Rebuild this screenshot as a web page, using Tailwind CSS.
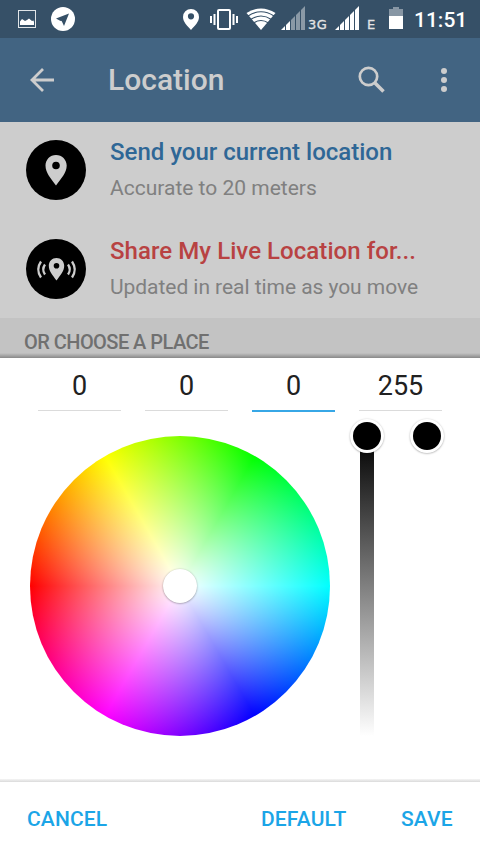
<!DOCTYPE html>
<html lang="en">
<head>
<meta charset="utf-8">
<title>Location</title>
<script src="https://cdn.jsdelivr.net/npm/@tailwindcss/browser@4"></script>
</head>
<body class="w-[480px] h-[854px] overflow-hidden bg-white font-['Roboto',sans-serif]">
<div class="flex h-[358px] flex-col overflow-hidden bg-[#cdcdcd]">
  <!-- status bar -->
  <div class="flex h-[38px] shrink-0 items-start bg-[#365067] text-white">
    <svg class="ml-[18px] mt-[10px] h-[18px] w-[18px] shrink-0" viewBox="0 0 18 18"><rect x=".5" y=".5" width="17" height="17" fill="none" stroke="#fff" stroke-opacity=".85"/><path d="M2 15v-3.500l2-2.500 3 2 2-1 2-1.500 3 2.500 1.500-.5.5 1.500v3z" fill="#fff"/></svg>
    <svg class="ml-[15px] mt-[7px] h-6 w-6 shrink-0" viewBox="0 0 24 24"><circle cx="12" cy="12" r="12" fill="#fff"/><path d="M18 6.500 5 11.500l4.500 2.500.5-.3.8.6 2.200 4.700z" fill="#365067"/></svg>
    <svg class="ml-[108px] mt-[9px] h-[21px] w-4 shrink-0" viewBox="0 0 16 21"><path fill="#fff" fill-rule="evenodd" d="M8 0a8 8 0 0 0-8 8c0 5 4 8.500 8 13 4-4.500 8-8 8-13a8 8 0 0 0-8-8zm0 4.200a3.100 3.100 0 1 1 0 6.200 3.100 3.100 0 0 1 0-6.200z"/></svg>
    <svg class="ml-[11px] mt-[9px] h-[21px] w-7 shrink-0" viewBox="0 0 28 21" fill="none" stroke="#fff"><rect x="8" y="1" width="12" height="19" rx="1" stroke-width="2"/><path d="M1 7v7M27 7v7" stroke-width="2"/><path d="M4.500 5v11M23.500 5v11" stroke-width="2"/></svg>
    <svg class="ml-[8px] mt-[8px] h-[22px] w-[30px] shrink-0" viewBox="0 0 30 22"><path d="M.5 5Q15-4 29.500 5L15 22z" fill="#fff"/><g fill="none" stroke="#365067" stroke-width="1.200"><path d="M2 8Q15-.5 28 8"/><path d="M4.500 11.500Q15 4.500 25.500 11.500"/><path d="M7.500 15Q15 10 22.500 15"/></g></svg>
    <svg class="ml-[5px] mt-[6px] h-6 w-6 shrink-0" viewBox="0 0 24 24"><path d="M0 24 4 20v4zM5 24v-5l4-4v9z" fill="#fff"/><path d="M10 24V14l4-4v14zM15 24V9l4-4v19zM20 24V4l4-4v24z" fill="#fff" fill-opacity=".42"/></svg>
    <span class="ml-[3px] mt-[17px] w-[19px] font-['DejaVu_Sans'] text-[13px] leading-4 tracking-[.4px] text-[#e4e4e4] [-webkit-text-stroke:.3px_#e4e4e4]">3G</span>
    <svg class="ml-[8px] mt-[6px] h-6 w-6 shrink-0" viewBox="0 0 24 24"><path d="M0 24 4 20v4zM5 24v-5l4-4v9zM10 24V14l4-4v14zM15 24V9l4-4v19zM20 24V4l4-4v24z" fill="#fff"/></svg>
    <span class="ml-[8px] mt-[17px] w-[10px] font-['DejaVu_Sans'] text-[13px] leading-4 text-[#e4e4e4] [-webkit-text-stroke:.3px_#e4e4e4]">E</span>
    <svg class="ml-[12px] mt-[7px] h-[22px] w-[14px] shrink-0" viewBox="0 0 14 22"><path d="M4 0h6v2h4v7H0V2h4z" fill="#8796a4"/><path d="M0 9h14v13H0z" fill="#fff"/></svg>
    <span class="ml-[11px] mt-[8px] text-[21px] font-medium leading-6">11:51</span>
  </div>
  <!-- toolbar -->
  <div class="flex h-[84px] shrink-0 items-center bg-[#426482] text-[#cdcdcd]">
    <svg class="ml-[30px] h-6 w-6" viewBox="0 0 24 24" fill="none" stroke="currentColor" stroke-width="2.800"><path d="M13 1 2 12l11 11M2 12h22"/></svg>
    <h1 class="ml-[54px] mb-[2px] w-[250px] text-[30px] font-medium">Location</h1>
    <svg class="h-7 w-7" viewBox="0 0 28 28" fill="none" stroke="currentColor"><circle cx="10.500" cy="10.500" r="8.700" stroke-width="2.700"/><path d="m17 17 8.500 8.500" stroke-width="3.500"/></svg>
    <svg class="ml-[55px] h-6 w-6" viewBox="0 0 24 24" fill="currentColor"><circle cx="3" cy="3" r="3"/><circle cx="3" cy="12" r="3"/><circle cx="3" cy="21" r="3"/></svg>
  </div>
  <!-- location options -->
  <div class="flex h-[99px] shrink-0 pl-[26px] pt-[18px]">
    <svg class="h-[60px] w-[60px] shrink-0" viewBox="0 0 60 60"><circle cx="30" cy="30" r="30"/><path fill="#cdcdcd" fill-rule="evenodd" d="M30 15c-6 0-10.500 4.700-10.500 10.500C19.500 33 25 38.500 30 45.500 35 38.500 40.700 33 40.700 25.500 40.700 19.700 36 15 30 15zm0 6.700a3.800 3.800 0 1 1 0 7.600 3.800 3.800 0 0 1 0-7.600z"/></svg>
    <div class="ml-6 -mt-1 whitespace-nowrap">
      <div class="text-[24px] font-medium leading-8 text-[#2f6796]">Send your current location</div>
      <div class="mt-1 text-[21px] leading-8 text-[#808080]">Accurate to 20 meters</div>
    </div>
  </div>
  <div class="flex h-[97px] shrink-0 pl-[26px] pt-[18px]">
    <svg class="h-[60px] w-[60px] shrink-0" viewBox="0 0 60 60"><circle cx="30" cy="30" r="30"/><path fill="#cdcdcd" fill-rule="evenodd" d="M30.500 19c-4.400 0-7.700 3.400-7.700 7.700 0 5.600 4 9.600 7.700 14.800 3.700-5.200 7.700-9.200 7.700-14.800 0-4.300-3.300-7.700-7.700-7.700zm0 5a2.800 2.800 0 1 1 0 5.600 2.800 2.800 0 0 1 0-5.600z"/><path d="M19 25.500q-3.500 5 0 10M15 22.500q-5.500 8 0 16M42 25.500q3.500 5 0 10M46 22.500q5.500 8 0 16" fill="none" stroke="#cdcdcd" stroke-width="2.300"/></svg>
    <div class="ml-6 -mt-1 whitespace-nowrap">
      <div class="text-[24px] font-medium leading-8 tracking-[.06px] text-[#b84242]">Share My Live Location for...</div>
      <div class="mt-1 text-[21px] leading-8 tracking-[-.05px] text-[#808080]">Updated in real time as you move</div>
    </div>
  </div>
  <div class="relative h-10 shrink-0 bg-[#c3c3c3] pl-6 pt-2">
    <div class="whitespace-nowrap text-[20px] font-medium leading-8 tracking-[-.54px] text-[#707070]">OR CHOOSE A PLACE</div>
    <div class="absolute inset-x-0 bottom-0 h-[5px] bg-linear-to-b from-transparent to-black/30"></div>
  </div>
</div>
<!-- color picker sheet -->
<div class="flex h-[496px] flex-col bg-white">
  <div class="flex h-[54px] shrink-0 gap-6 pl-[38px] text-center text-[27px] leading-[56px] text-[#212121]">
    <div class="h-[53px] w-[83px] border-b border-[#dbdbdb]">0</div>
    <div class="h-[53px] w-[83px] border-b border-[#dbdbdb]">0</div>
    <div class="h-[54px] w-[83px] border-b-2 border-[#37a7e6]">0</div>
    <div class="h-[53px] w-[83px] border-b border-[#dbdbdb]">255</div>
  </div>
  <div class="flex h-[367px] shrink-0 pl-[30px]">
    <div class="mt-6 flex h-[300px] w-[300px] items-center justify-center rounded-full bg-[radial-gradient(closest-side,#fff,#fff0),conic-gradient(from_270deg,red,yellow,lime,cyan,blue,magenta,red)]">
      <div class="h-[34px] w-[34px] rounded-full bg-white shadow-[0_0.5px_2px_rgba(0,0,0,.4)]"></div>
    </div>
    <div class="relative ml-[30px] mt-6 h-[300px] w-[14px] bg-[linear-gradient(to_bottom,#000,#fff)]">
      <div class="absolute -left-[10px] -top-[17px] h-[34px] w-[34px] rounded-full bg-white p-[3px] shadow-[0_0.5px_2px_rgba(0,0,0,.35)]"><div class="h-7 w-7 rounded-full bg-black"></div></div>
    </div>
    <div class="ml-[36px] mt-[7px] h-[34px] w-[34px] rounded-full bg-white p-[3px] shadow-[0_0.5px_2px_rgba(0,0,0,.35)]"><div class="h-7 w-7 rounded-full bg-black"></div></div>
  </div>
  <div class="h-[3px] shrink-0 bg-linear-to-b from-[#f5f5f5] to-[#dadada]"></div>
  <div class="flex h-[72px] items-center pl-[27px] pt-[4px] text-[21px] font-medium tracking-[.15px] text-[#1ba5e7]">
    <span class="w-[234px]">CANCEL</span><span class="w-[140px]">DEFAULT</span><span>SAVE</span>
  </div>
</div>
</body>
</html>
